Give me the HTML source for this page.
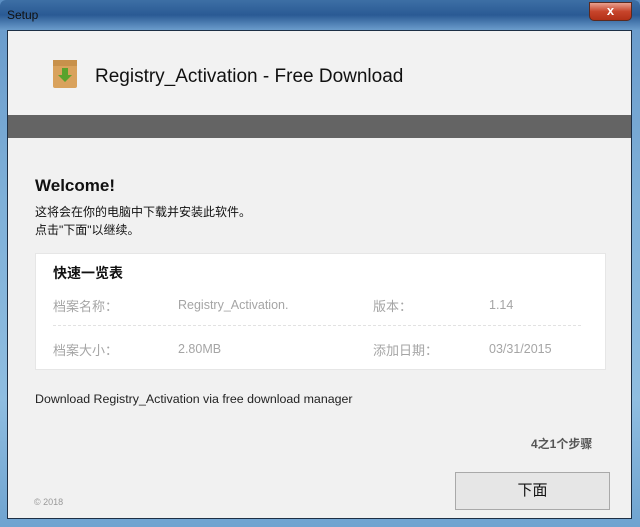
<!DOCTYPE html>
<html><head><meta charset="utf-8"><style>
*{margin:0;padding:0;box-sizing:border-box}
body{width:640px;height:527px;overflow:hidden;background:#5b8fc4;font-family:"Liberation Sans","Noto Sans CJK SC",sans-serif;position:relative}
.frame{position:absolute;left:0;top:0;width:640px;height:527px;background:linear-gradient(180deg,#3d6fa5 0,#2a5a94 15px,#6b9ccc 30px,#7fb0d8 200px,#8fbde0 400px,#6fa3d0 527px);border-radius:6px 6px 0 0}
.title{position:absolute;left:7px;top:8px;font-size:12px;color:#111}
.close{position:absolute;left:589px;top:2px;width:43px;height:19px;border-radius:0 0 5px 5px;background:linear-gradient(#e9a08f,#c7442b 50%,#b23017);border:1px solid #5a2a20;color:#fff;font-size:13px;font-weight:bold;text-align:center;line-height:16px}
.inner{position:absolute;left:7px;top:30px;width:625px;height:489px;background:#f1f1f1;border:1px solid #1d2f45}
.hdr{position:absolute;left:0;top:0;width:100%;height:84px;background:#f2f2f2}
.band{position:absolute;left:0;top:84px;width:100%;height:23px;background:#646464}
.h1{position:absolute;left:87px;top:35px;font-size:19px;color:#111}
.box{position:absolute;left:44px;top:28px;width:26px;height:30px}
.t{position:absolute;white-space:nowrap}
.card{position:absolute;left:27px;top:222px;width:571px;height:117px;background:#fff;border:1px solid #e6e6e6}
.g{color:#a5a5a5;font-size:13px}
.v{font-size:12.5px}
.btn{position:absolute;left:447px;top:441px;width:155px;height:38px;background:#e6e6e6;border:1px solid #a9a9a9;font-size:15px;text-align:center;line-height:36px;color:#111}
</style></head><body>
<div class="frame"></div>
<div class="title">Setup</div>
<div class="close">x</div>
<div class="inner">
 <div class="hdr"></div>
 <svg class="box" viewBox="0 0 26 30"><rect x="1" y="1" width="24" height="28" rx="2" fill="#d9a25c"/><rect x="1" y="1" width="24" height="6" fill="#c8914b"/><path d="M10 9h6v7h4l-7 7-7-7h4z" fill="#5aa22c"/></svg>
 <div class="t h1">Registry_Activation - Free Download</div>
 <div class="band"></div>
 <div class="t" style="left:27px;top:145px;font-size:17px;font-weight:bold;color:#111">Welcome!</div>
 <div class="t" style="left:27px;top:172px;font-size:12px;color:#111">这将会在你的电脑中下载并安装此软件。</div>
 <div class="t" style="left:27px;top:190px;font-size:12px;color:#111">点击"下面"以继续。</div>
 <div class="card">
  <div class="t" style="left:17px;top:9px;font-size:14px;font-weight:bold;color:#111">快速一览表</div>
  <div class="t g" style="left:17px;top:42px">档案名称：</div>
  <div class="t g v" style="left:142px;top:44px">Registry_Activation.</div>
  <div class="t g" style="left:337px;top:42px">版本：</div>
  <div class="t g v" style="left:453px;top:44px">1.14</div>
  <div style="position:absolute;left:17px;top:71px;width:528px;border-top:1px dashed #e2e2e2"></div>
  <div class="t g" style="left:17px;top:86px">档案大小：</div>
  <div class="t g v" style="left:142px;top:88px">2.80MB</div>
  <div class="t g" style="left:337px;top:86px">添加日期：</div>
  <div class="t g v" style="left:453px;top:88px">03/31/2015</div>
 </div>
 <div class="t" style="left:27px;top:361px;font-size:12.4px;color:#222">Download Registry_Activation via free download manager</div>
 <div class="t" style="left:523px;top:404px;font-size:12px;font-weight:bold;color:#555">4之1个步骤</div>
 <div class="t" style="left:26px;top:466px;font-size:9px;color:#999">© 2018</div>
 <div class="btn">下面</div>
</div>
</body></html>
